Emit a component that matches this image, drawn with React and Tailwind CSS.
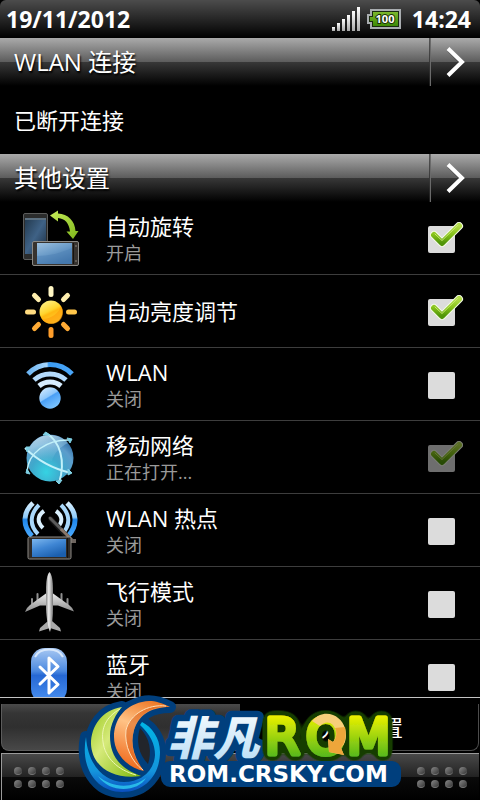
import React, { useState } from "react";

function RotateIcon() {
  return (
    <svg viewBox="0 0 64 64" className="h-16 w-16 shrink-0" aria-hidden="true">
      <defs>
        <linearGradient id="rotBack" x1="0" y1="0" x2="1" y2="1">
          <stop offset="0" stopColor="#22384c" />
          <stop offset="0.5" stopColor="#3f6286" />
          <stop offset="1" stopColor="#1b2c3e" />
        </linearGradient>
        <linearGradient id="rotFront" x1="0" y1="0" x2="0.6" y2="1">
          <stop offset="0" stopColor="#9cc0de" />
          <stop offset="0.5" stopColor="#6d9dc9" />
          <stop offset="1" stopColor="#3c6fa5" />
        </linearGradient>
        <linearGradient id="rotArrow" x1="0" y1="0" x2="1" y2="1">
          <stop offset="0" stopColor="#c8ee5a" />
          <stop offset="1" stopColor="#7db51a" />
        </linearGradient>
      </defs>
      <rect x="5.5" y="7.5" width="24" height="46" rx="1.5" fill="#2b2c2c" stroke="#5b5c5b" />
      <rect x="7" y="12" width="21" height="36" fill="url(#rotBack)" />
      <path d="M7 12h21v2H7z" fill="#5d7181" />
      <rect x="14.5" y="35.5" width="46" height="24" rx="1.5" fill="#37332f" stroke="#8b8a86" />
      <rect x="19" y="37" width="35" height="21" fill="url(#rotFront)" />
      <path d="M19 50c12 0 24-3 35-8v16H19z" fill="#4e82b5" opacity="0.5" />
      <path d="M55.500 37v21" stroke="#15120f" strokeWidth="1" />
      <circle cx="58" cy="40" r="0.8" fill="#99948c" />
      <circle cx="58" cy="55" r="0.8" fill="#99948c" />
      <path
        d="M32 9.500L40 4.500V7.500C50 8 57 15 57.500 25H60.500L55 33L48.500 25.500H52C51 17 47 12.500 40 12V15.500Z"
        fill="url(#rotArrow)"
      />
    </svg>
  );
}

function SunIcon() {
  return (
    <svg viewBox="0 0 64 64" className="h-16 w-16 shrink-0" aria-hidden="true">
      <defs>
        <linearGradient id="sunBody" x1="0.2" y1="0" x2="0.7" y2="1">
          <stop offset="0" stopColor="#fff28a" />
          <stop offset="0.45" stopColor="#ffd52e" />
          <stop offset="0.55" stopColor="#ffb812" />
          <stop offset="1" stopColor="#ffd33a" />
        </linearGradient>
      </defs>
      <circle cx="33" cy="33" r="11.500" fill="url(#sunBody)" />
      <path d="M24 40c9 0 17-6 19-13a11.500 11.500 0 0 1-19 13z" fill="#ff9d0a" opacity="0.6" />
      <g strokeWidth="5" strokeLinecap="round">
        <path d="M33 9.500v6" stroke="#fff6c4" />
        <path d="M16.500 16.500l4 4M49.500 16.500l-4 4" stroke="#ffefae" />
        <path d="M9.500 33h6" stroke="#ffdb80" />
        <path d="M50.500 33h6" stroke="#ffc64a" />
        <path d="M16.500 49.500l4-4M49.500 49.500l-4-4" stroke="#ffab35" />
        <path d="M33 50.500v6" stroke="#ff9d2a" />
      </g>
    </svg>
  );
}

function WifiIcon() {
  return (
    <svg viewBox="0 0 64 64" className="h-16 w-16 shrink-0" aria-hidden="true">
      <defs>
        <linearGradient id="wifiArc" x1="0" y1="0" x2="1" y2="0">
          <stop offset="0" stopColor="#6cb4f2" />
          <stop offset="0.43" stopColor="#a6d6fb" />
          <stop offset="0.47" stopColor="#3b9cf3" />
          <stop offset="1" stopColor="#4aa6f8" />
        </linearGradient>
        <linearGradient id="wifiDot" x1="0" y1="0" x2="0.6" y2="1">
          <stop offset="0" stopColor="#dff1ff" />
          <stop offset="0.5" stopColor="#8cc6fb" />
          <stop offset="0.55" stopColor="#4a9ff5" />
          <stop offset="1" stopColor="#7cc4ff" />
        </linearGradient>
      </defs>
      <g fill="none" strokeWidth="5">
        <path d="M10 22A30 30 0 0 1 54 22" stroke="url(#wifiArc)" />
        <path d="M16 28A24 24 0 0 1 48 28" stroke="#b4dafb" />
        <path d="M21 34A17 17 0 0 1 43 34" stroke="#d6ecff" />
      </g>
      <circle cx="32" cy="46" r="10.700" fill="url(#wifiDot)" />
    </svg>
  );
}

function GlobeIcon() {
  return (
    <svg viewBox="0 0 64 64" className="h-16 w-16 shrink-0" aria-hidden="true">
      <defs>
        <radialGradient id="globeBody" cx="0.42" cy="0.8" r="0.8">
          <stop offset="0" stopColor="#35d3e3" />
          <stop offset="0.4" stopColor="#3fa9cc" />
          <stop offset="0.75" stopColor="#5c9ccb" />
          <stop offset="1" stopColor="#2f6ba2" />
        </radialGradient>
        <linearGradient id="globeShine" x1="0" y1="0" x2="0.5" y2="1">
          <stop offset="0" stopColor="#e6f7ff" stopOpacity="0.9" />
          <stop offset="1" stopColor="#8dcde8" stopOpacity="0.1" />
        </linearGradient>
      </defs>
      <circle cx="32" cy="33" r="23.500" fill="url(#globeBody)" />
      <path d="M10 26C14 14 24 9 34 10C42 11 47 14 50 18C42 22 36 28 34 36C26 36 17 32 10 26Z" fill="url(#globeShine)" />
      <g fill="none" stroke="#c2f1fa" strokeWidth="2">
        <path d="M28 8C42 16 48 36 41 58" />
        <path d="M7 23C20 36 36 44 53 48" />
        <path d="M9 47C10 28 28 14 53 15" strokeWidth="1.500" />
      </g>
      <g fill="#7fd0e4" stroke="#7fd0e4" strokeWidth="1" strokeLinejoin="round">
        <path d="M25 10L27.500 7L32 10Z" />
        <path d="M8 22L12 22L9 27Z" />
        <path d="M50 44L54 48L50 50Z" />
        <path d="M38 56L44 55L41 59Z" />
        <path d="M9 44L12 49L8 48Z" />
        <path d="M49 13L54 14L52 18Z" />
      </g>
    </svg>
  );
}

function HotspotIcon() {
  return (
    <svg viewBox="0 0 64 64" className="h-16 w-16 shrink-0" aria-hidden="true">
      <defs>
        <linearGradient id="hotWave" gradientUnits="userSpaceOnUse" x1="0" y1="4" x2="0" y2="38">
          <stop offset="0" stopColor="#d9f0ff" />
          <stop offset="0.45" stopColor="#8ecbfa" />
          <stop offset="0.52" stopColor="#1e86ec" />
          <stop offset="1" stopColor="#49a8fb" />
        </linearGradient>
        <linearGradient id="hotScreen" x1="0" y1="0" x2="0.6" y2="1">
          <stop offset="0" stopColor="#7db7ee" />
          <stop offset="0.5" stopColor="#3f86d4" />
          <stop offset="1" stopColor="#1b5fae" />
        </linearGradient>
      </defs>
      <g fill="none" stroke="url(#hotWave)" strokeWidth="5">
        <path d="M15 5C5 14 4 28 14 38" />
        <path d="M21 7C12 16 11 27 20 36" stroke="#a9d8fb" strokeWidth="4" />
        <path d="M26 13C19 18 19 24 25 30" stroke="#d9effd" strokeWidth="4" />
        <path d="M49 5C59 14 60 28 50 38" />
        <path d="M43 7C52 16 53 27 44 36" stroke="#a9d8fb" strokeWidth="4" />
        <path d="M38 13C45 18 45 24 39 30" stroke="#d9effd" strokeWidth="4" />
      </g>
      <path d="M32 20L52 42" stroke="#151515" strokeWidth="5" />
      <path d="M32 20L44 32" stroke="#5b5b5b" strokeWidth="3" strokeLinecap="round" />
      <path d="M43 31L55 43" stroke="#8a7668" strokeWidth="3" />
      <path d="M51 41h7v4h-5z" fill="#6d655f" />
      <rect x="10" y="39" width="43" height="22" rx="1.500" fill="#2e2a27" stroke="#8d8a86" />
      <rect x="14" y="41" width="34" height="18" fill="url(#hotScreen)" />
      <path d="M49.500 40v20" stroke="#14110f" />
    </svg>
  );
}

function PlaneIcon() {
  return (
    <svg viewBox="0 0 64 64" className="h-16 w-16 shrink-0" aria-hidden="true">
      <defs>
        <linearGradient id="planeBody" x1="0" y1="0" x2="1" y2="0">
          <stop offset="0" stopColor="#8a8a8a" />
          <stop offset="0.4" stopColor="#ededed" />
          <stop offset="1" stopColor="#777777" />
        </linearGradient>
        <linearGradient id="planeWing" x1="0" y1="0" x2="0" y2="1">
          <stop offset="0" stopColor="#f2f2f2" />
          <stop offset="1" stopColor="#8c8c8c" />
        </linearGradient>
      </defs>
      <g fill="#8f8f8f">
        <rect x="18.500" y="22" width="2" height="9" rx="1" />
        <rect x="13" y="27" width="2" height="8" rx="1" />
        <rect x="42.500" y="22" width="2" height="9" rx="1" />
        <rect x="48.500" y="27" width="2" height="8" rx="1" />
      </g>
      <path d="M30 21L12 34Q8 37 7 41L22 34.500H40L56 40.500Q55 37 51 34L33 21Z" fill="url(#planeWing)" />
      <path d="M30 50L22 57L21 60.500L32 57L43 60.500L42 57L34 50Z" fill="#a8a8a8" />
      <path d="M31.500 1C29 4 28 10 28 18V38C28.500 48 30 56 32 61C33.500 56 35 48 35 38V18C35 10 34 4 31.500 1Z" fill="url(#planeBody)" />
    </svg>
  );
}

function BluetoothIcon() {
  return (
    <svg viewBox="0 0 64 64" className="h-16 w-16 shrink-0" aria-hidden="true">
      <defs>
        <linearGradient id="btBody" x1="0" y1="0" x2="0" y2="1">
          <stop offset="0" stopColor="#a9c9f3" />
          <stop offset="0.42" stopColor="#4b89e0" />
          <stop offset="0.5" stopColor="#2668d4" />
          <stop offset="1" stopColor="#4b92f2" />
        </linearGradient>
      </defs>
      <rect x="13" y="4" width="36" height="55" rx="14" fill="url(#btBody)" />
      <path d="M17 13C20 7 25 5.500 31 5.500S42 7 45 13" fill="none" stroke="#d7e7fb" strokeWidth="2" />
      <path
        d="M22 23L40 40.500L31 49V14L40 22.500L22 40"
        fill="none"
        stroke="#ffffff"
        strokeWidth="3"
        strokeLinejoin="round"
        strokeLinecap="round"
      />
    </svg>
  );
}

function CheckMark() {
  return (
    <svg
      viewBox="0 0 36 30"
      className="pointer-events-none absolute -top-1 left-0 h-[30px] w-9"
      aria-hidden="true"
    >
      <defs>
        <linearGradient id="tick" x1="0" y1="0" x2="0" y2="1">
          <stop offset="0" stopColor="#b3dc4a" />
          <stop offset="0.5" stopColor="#86c21a" />
          <stop offset="1" stopColor="#4f9408" />
        </linearGradient>
      </defs>
      <g fill="none" strokeLinecap="round" strokeLinejoin="round">
        <path d="M6 13L14 21L31 4" stroke="#f4fbe6" strokeWidth="8" />
        <path d="M6 13L14 21L31 4" stroke="url(#tick)" strokeWidth="6" />
        <path d="M7 12L14 18.500L30 3" stroke="#c9ec70" strokeWidth="1" />
      </g>
    </svg>
  );
}

function SectionHeader({ title }) {
  return (
    <div className="flex h-12 shrink-0 items-stretch bg-[linear-gradient(#aaaaaa_0%,#5c5c5c_50%,#383838_50%,#000000_100%)]">
      <h2 className="flex flex-1 items-center pl-[14px] text-2xl font-normal [text-shadow:1px_2px_2px_#000]">
        {title}
      </h2>
      <div className="w-px bg-[linear-gradient(#555555,#1c1c1c)]" />
      <button
        type="button"
        aria-label={title}
        className="flex w-[50px] items-center justify-center border-l border-[#6a6a6a]"
      >
        <svg viewBox="0 0 20 30" className="h-[30px] w-5" aria-hidden="true">
          <path d="M3 3L16 16L3 29" fill="none" stroke="#222222" strokeWidth="4" opacity="0.6" />
          <path d="M2 1.500L16 15L2 28.500" fill="none" stroke="#ffffff" strokeWidth="4" />
        </svg>
      </button>
    </div>
  );
}

function SettingRow({ setting, onToggle }) {
  const { icon: Icon, title, status, checked, pending } = setting;
  return (
    <li className="border-b border-[#3d3d3d]">
      <label className="flex h-[72px] items-center pr-6 pl-[18px]">
        <Icon />
        <span className="flex flex-1 flex-col pl-6">
          <span className="text-[22px] leading-7">{title}</span>
          {status && <span className="pt-px text-lg leading-6 text-[#9a9a9a]">{status}</span>}
        </span>
        <span className={`relative mt-[3px] mr-px h-[27px] w-[27px] ${pending ? "opacity-50" : ""}`}>
          <input
            type="checkbox"
            checked={checked}
            disabled={pending}
            onChange={onToggle}
            className="block h-[27px] w-[27px] appearance-none rounded-xs bg-[#dcdcdc]"
          />
          {checked && <CheckMark />}
        </span>
      </label>
    </li>
  );
}

function Dots() {
  return (
    <div className="grid grid-cols-4 gap-x-[6px] gap-y-[5px]">
      {Array.from({ length: 8 }, (_, i) => (
        <span
          key={i}
          className="h-2 w-2 rounded-full border-b border-[#777777] bg-[linear-gradient(135deg,#8a8a8a,#333333)]"
        />
      ))}
    </div>
  );
}

function Watermark() {
  return (
    <svg
      viewBox="0 0 332 108"
      className="pointer-events-none absolute bottom-0 left-1/2 h-[108px] w-[332px] -translate-x-1/2"
      role="img"
      aria-label="非凡ROM"
    >
      <defs>
        <linearGradient id="wmRing" x1="0" y1="0" x2="0" y2="1">
          <stop offset="0" stopColor="#00b4e6" />
          <stop offset="0.7" stopColor="#1495dc" />
          <stop offset="1" stopColor="#0a4fc0" />
        </linearGradient>
        <linearGradient id="wmGreen" x1="0" y1="0" x2="1" y2="1">
          <stop offset="0" stopColor="#98c81c" />
          <stop offset="0.4" stopColor="#d6ea7a" />
          <stop offset="1" stopColor="#7fb80c" />
        </linearGradient>
        <linearGradient id="wmOrange" x1="0.7" y1="0" x2="0.4" y2="1">
          <stop offset="0" stopColor="#ee7a28" />
          <stop offset="0.4" stopColor="#ffc285" />
          <stop offset="1" stopColor="#ef6a1c" />
        </linearGradient>
        <linearGradient id="wmCjk" x1="0" y1="0" x2="0" y2="1">
          <stop offset="0" stopColor="#ffffff" />
          <stop offset="1" stopColor="#b5dcf5" />
        </linearGradient>
        <linearGradient id="wmRom" gradientUnits="userSpaceOnUse" x1="0" y1="23" x2="0" y2="65">
          <stop offset="0" stopColor="#eef200" />
          <stop offset="1" stopColor="#55b81c" />
        </linearGradient>
        {/* grows the shape into a solid rounded outline */}
        <filter id="wmOutline" filterUnits="userSpaceOnUse" x="170" y="0" width="162" height="100">
          <feGaussianBlur in="SourceAlpha" stdDeviation="4" />
          <feComponentTransfer>
            <feFuncR type="table" tableValues="0.01 0.01" />
            <feFuncG type="table" tableValues="0.05 0.05" />
            <feFuncB type="table" tableValues="0.002 0.002" />
            <feFuncA type="linear" slope="12" intercept="-1" />
          </feComponentTransfer>
          <feMerge>
            <feMergeNode />
            <feMergeNode in="SourceGraphic" />
          </feMerge>
        </filter>
      </defs>

      <g fill="#003f7d" stroke="#003f7d" strokeWidth="12" strokeLinejoin="round">
        <path d="M12 45C6 75 22 100 48 100C72 100 86 82 86 60C86 46 78 35 68 30L66 33C76 42 81 52 81 63C80 80 66 90 50 90C32 90 14 75 12 45Z" />
        <path d="M48 15C28 18 17 34 17 52C18 74 38 88 67 84L80 66L60 34Z" />
        <path d="M96 15C84 9 76 8 68 10C50 14 40 28 40 45C40 62 54 76 70 79C60 66 56 52 60 38C64 24 76 15 96 15Z" />
      </g>
      <path d="M12 45C6 75 22 100 48 100C72 100 86 82 86 60C86 46 78 35 68 30L66 33C76 42 81 52 81 63C80 80 66 90 50 90C32 90 14 75 12 45Z" fill="url(#wmRing)" />
      <path d="M24 84C38 96 58 97 72 86C64 100 36 102 24 84Z" fill="#35dcf5" opacity="0.7" />
      <path d="M48 15C28 18 17 34 17 52C18 74 38 88 67 84C44 76 36 62 36 44C36 32 42 22 48 15Z" fill="url(#wmGreen)" stroke="#003f7d" strokeWidth="4" paintOrder="stroke" />
      <path d="M46 17C32 25 27 36 29 50C31 66 44 78 62 83" fill="none" stroke="#eef7b4" strokeWidth="1" />
      <path d="M66 36C62 48 64 62 74 72C78 60 76 46 66 36Z" fill="#22252b" />
      <path d="M96 15C84 9 76 8 68 10C50 14 40 28 40 45C40 62 54 76 70 79C60 66 56 52 60 38C64 24 76 15 96 15Z" fill="url(#wmOrange)" stroke="#003f7d" strokeWidth="5" paintOrder="stroke" strokeLinejoin="round" />
      <path d="M92 14C74 12 56 22 52 38C50 54 58 70 69 78C59 66 56 52 60 38C64 24 76 15 92 14Z" fill="#d85a12" opacity="0.5" />
      <path d="M92 14C74 12 56 22 52 38C50 54 58 70 69 78" fill="none" stroke="#ffe0b8" strokeWidth="1" />

      <text
        x="93"
        y="63"
        fontSize="46"
        className="font-['Noto_Sans_CJK_SC',sans-serif] font-black italic"
        fill="url(#wmCjk)"
        stroke="#003f7d"
        strokeWidth="13"
        strokeLinejoin="round"
        paintOrder="stroke"
      >
        非凡
      </text>

      <g filter="url(#wmOutline)">
        <g
          className="font-['DejaVu_Sans',sans-serif]"
          fontSize="50"
          fill="url(#wmRom)"
          stroke="url(#wmRom)"
          strokeWidth="5"
          strokeLinejoin="round"
        >
          <text x="191" y="62">R</text>
          <text x="232" y="62">O</text>
          <text x="273" y="62">M</text>
        </g>
      </g>
      <path
        d="M238 29C244 22 252 20 259 23C267 26 272 34 272 43C272 49 270 53 267 56L270 63L255 60L254 47L259 50C263 45 263 38 259 33C255 29 250 30 246 34Z"
        fill="#f8cf7a"
      />
      <path d="M259 50C263 46 263 40 261 36L271 35C273 43 271 51 267 56L270 63L255 60L254 47Z" fill="#eea63a" />

      <rect x="89" y="71" width="236" height="22" rx="7" fill="#003f7d" stroke="#003f7d" strokeWidth="4" />
      <text
        x="95"
        y="90"
        fontSize="23"
        className="font-['DejaVu_Sans',sans-serif] font-bold"
        fill="#ffffff"
      >
        ROM.CRSKY.COM
      </text>
    </svg>
  );
}

const initialSettings = [
  { id: "rotate", icon: RotateIcon, title: "自动旋转", status: "开启", checked: true },
  { id: "brightness", icon: SunIcon, title: "自动亮度调节", checked: true },
  { id: "wlan", icon: WifiIcon, title: "WLAN", status: "关闭", checked: false },
  { id: "mobile", icon: GlobeIcon, title: "移动网络", status: "正在打开...", checked: true, pending: true },
  { id: "hotspot", icon: HotspotIcon, title: "WLAN 热点", status: "关闭", checked: false },
  { id: "airplane", icon: PlaneIcon, title: "飞行模式", status: "关闭", checked: false },
  { id: "bluetooth", icon: BluetoothIcon, title: "蓝牙", status: "关闭", checked: false },
];

function App() {
  const [settings, setSettings] = useState(initialSettings);

  const toggle = (id) => {
    setSettings((list) =>
      list.map((s) => (s.id === id ? { ...s, checked: !s.checked } : s))
    );
  };

  return (
    <div className="relative flex h-screen flex-col overflow-hidden bg-black font-['Open_Sans','Noto_Sans_CJK_SC',sans-serif] text-white">
      <header className="flex h-[38px] shrink-0 items-center rounded-t-md bg-[linear-gradient(#4c4c4c,#2a2a2a_45%,#000000)] pr-[9px] pl-[6px] text-[23px] font-bold">
        <span className="flex-1">19/11/2012</span>
        <svg viewBox="0 0 28 24" className="mr-[7px] h-6 w-7" aria-label="signal" role="img">
          <defs>
            <linearGradient id="bars" x1="0" y1="0" x2="0" y2="1">
              <stop offset="0" stopColor="#ffffff" />
              <stop offset="1" stopColor="#a8a8a8" />
            </linearGradient>
          </defs>
          <g fill="url(#bars)">
            <rect x="0" y="20" width="3" height="4" />
            <rect x="5" y="16" width="3" height="8" />
            <rect x="10" y="12" width="3" height="12" />
            <rect x="15" y="8" width="3" height="16" />
            <rect x="20" y="4" width="3" height="20" />
            <rect x="25" y="0" width="3" height="24" />
          </g>
        </svg>
        <svg viewBox="0 0 34 20" className="mr-[11px] h-5 w-[34px]" aria-label="battery" role="img">
          <defs>
            <linearGradient id="cell" x1="0" y1="0" x2="0" y2="1">
              <stop offset="0" stopColor="#7cb82c" />
              <stop offset="1" stopColor="#3d8a06" />
            </linearGradient>
          </defs>
          <path d="M4 1H33V19H4V14H1V6H4Z" fill="#1a2a10" stroke="#a9adb0" strokeWidth="2" />
          <path d="M6 3H31V17H6V12H3V8H6Z" fill="url(#cell)" />
          <text
            x="18"
            y="14"
            textAnchor="middle"
            fontSize="11"
            fill="#ffffff"
            stroke="#1c3008"
            strokeWidth="2"
            paintOrder="stroke"
          >
            100
          </text>
        </svg>
        <span>14:24</span>
      </header>

      <SectionHeader title="WLAN 连接" />
      <p className="flex h-[68px] shrink-0 items-center pl-[14px] text-[22px]">已断开连接</p>
      <SectionHeader title="其他设置" />

      <ul className="min-h-0 flex-1 overflow-hidden">
        {settings.map((s) => (
          <SettingRow key={s.id} setting={s} onToggle={() => toggle(s.id)} />
        ))}
      </ul>

      <nav className="flex shrink-0 border-t border-[#c4c4c4] px-px pt-[6px] pb-[2px] text-[22px]">
        <button
          type="button"
          className="h-[47px] flex-1 rounded-bl-lg border-b border-l border-[#5c5c5c] bg-[linear-gradient(#4a4a4a,#353535_20%,#2f2f2f_50%,#484848)]"
        >
          通知
        </button>
        <button
          type="button"
          className="h-[47px] flex-1 rounded-br-lg border-r border-b border-[#4c4c4c] bg-black"
        >
          快速设置
        </button>
      </nav>

      <footer className="mx-px flex h-[47px] shrink-0 items-center justify-between border-t border-l border-[#9a9a9a] bg-[linear-gradient(#484848_0%,#222222_50%,#0a0a0a_50%,#000000_100%)] px-3">
        <Dots />
        <Dots />
      </footer>

      <Watermark />
    </div>
  );
}

export default App;
